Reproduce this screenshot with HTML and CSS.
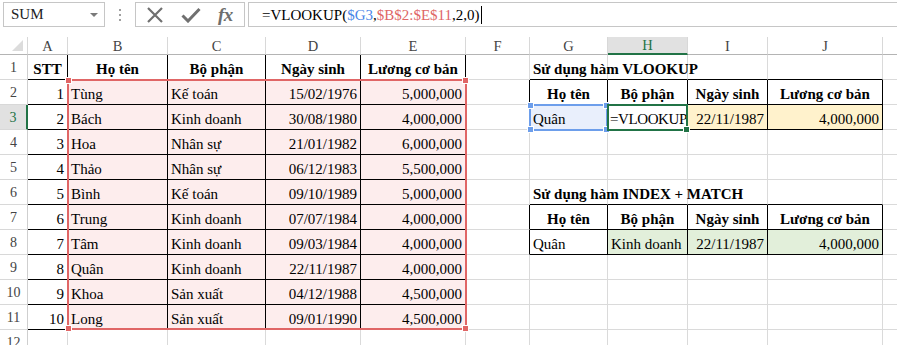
FILE: index.html
```html
<!DOCTYPE html>
<html>
<head>
<meta charset="utf-8">
<link rel="stylesheet" href="styles.css">
</head>
<body>
<div class="topbar">
  <div class="namebox"><span>SUM</span><span class="dd"></span></div>
  <div class="dots"><i></i><i></i><i></i></div>
  <div class="fbtns">
    <svg class="ico" width="18" height="16" viewBox="0 0 18 16"><path d="M2 1 L16 15 M16 1 L2 15" stroke="#707070" stroke-width="2.2" fill="none"/></svg>
    <svg class="ico" width="20" height="16" viewBox="0 0 20 16"><path d="M1.5 8.5 L7 14 L18.5 2" stroke="#707070" stroke-width="3" fill="none"/></svg>
    <span class="fx">fx</span>
  </div>
  <div class="finput">=VLOOKUP(<span class="cb">$G3</span>,<span class="cr">$B$2:$E$11</span>,2,0)<span class="caret"></span></div>
</div>

<div class="sheetwrap">
<div class="sheet">
  <div class="h corner"><span class="tri"></span></div>
  <div class="h">A</div><div class="h">B</div><div class="h">C</div><div class="h">D</div><div class="h">E</div><div class="h">F</div><div class="h">G</div><div class="h hsel">H</div><div class="h">I</div><div class="h">J</div><div class="h"></div>

  <div class="rh">1</div>
  <div class="c b ctr kr kb">STT</div><div class="c b ctr kr kb">Họ tên</div><div class="c b ctr kr kb">Bộ phận</div><div class="c b ctr kr kb">Ngày sinh</div><div class="c b ctr kr kb">Lương cơ bản</div>
  <div class="c"></div><div class="c b kb ov">Sử dụng hàm VLOOKUP</div><div class="c kb"></div><div class="c kb"></div><div class="c kb"></div><div class="c"></div>

  <div class="rh">2</div>
  <div class="c r kr kb">1</div><div class="c pk kr kb">Tùng</div><div class="c pk kr kb">Kế toán</div><div class="c pk r kr kb">15/02/1976</div><div class="c pk r kr kb">5,000,000</div>
  <div class="c kr"></div><div class="c b ctr kr kb">Họ tên</div><div class="c b ctr kr kb">Bộ phận</div><div class="c b ctr kr kb">Ngày sinh</div><div class="c b ctr kr kb">Lương cơ bản</div><div class="c"></div>

  <div class="rh rsel">3</div>
  <div class="c r kr kb">2</div><div class="c pk kr kb">Bách</div><div class="c pk kr kb">Kinh doanh</div><div class="c pk r kr kb">30/08/1980</div><div class="c pk r kr kb">4,000,000</div>
  <div class="c kr"></div><div class="c bl kr kb">Quân</div><div class="c edit kr kb">=VLOOKUP(</div><div class="c or r kr kb">22/11/1987</div><div class="c or r kr kb">4,000,000</div><div class="c"></div>

  <div class="rh">4</div>
  <div class="c r kr kb">3</div><div class="c pk kr kb">Hoa</div><div class="c pk kr kb">Nhân sự</div><div class="c pk r kr kb">21/01/1982</div><div class="c pk r kr kb">6,000,000</div>
  <div class="c"></div><div class="c"></div><div class="c"></div><div class="c"></div><div class="c"></div><div class="c"></div>

  <div class="rh">5</div>
  <div class="c r kr kb">4</div><div class="c pk kr kb">Thảo</div><div class="c pk kr kb">Nhân sự</div><div class="c pk r kr kb">06/12/1983</div><div class="c pk r kr kb">5,500,000</div>
  <div class="c"></div><div class="c"></div><div class="c"></div><div class="c"></div><div class="c"></div><div class="c"></div>

  <div class="rh">6</div>
  <div class="c r kr kb">5</div><div class="c pk kr kb">Bình</div><div class="c pk kr kb">Kế toán</div><div class="c pk r kr kb">09/10/1989</div><div class="c pk r kr kb">5,000,000</div>
  <div class="c"></div><div class="c b kb ov">Sử dụng hàm INDEX + MATCH</div><div class="c kb"></div><div class="c kb"></div><div class="c kb"></div><div class="c"></div>

  <div class="rh">7</div>
  <div class="c r kr kb">6</div><div class="c pk kr kb">Trung</div><div class="c pk kr kb">Kinh doanh</div><div class="c pk r kr kb">07/07/1984</div><div class="c pk r kr kb">4,000,000</div>
  <div class="c kr"></div><div class="c b ctr kr kb">Họ tên</div><div class="c b ctr kr kb">Bộ phận</div><div class="c b ctr kr kb">Ngày sinh</div><div class="c b ctr kr kb">Lương cơ bản</div><div class="c"></div>

  <div class="rh">8</div>
  <div class="c r kr kb">7</div><div class="c pk kr kb">Tâm</div><div class="c pk kr kb">Kinh doanh</div><div class="c pk r kr kb">09/03/1984</div><div class="c pk r kr kb">4,000,000</div>
  <div class="c kr"></div><div class="c kr kb">Quân</div><div class="c gr kr kb">Kinh doanh</div><div class="c gr r kr kb">22/11/1987</div><div class="c gr r kr kb">4,000,000</div><div class="c"></div>

  <div class="rh">9</div>
  <div class="c r kr kb">8</div><div class="c pk kr kb">Quân</div><div class="c pk kr kb">Kinh doanh</div><div class="c pk r kr kb">22/11/1987</div><div class="c pk r kr kb">4,000,000</div>
  <div class="c"></div><div class="c"></div><div class="c"></div><div class="c"></div><div class="c"></div><div class="c"></div>

  <div class="rh">10</div>
  <div class="c r kr kb">9</div><div class="c pk kr kb">Khoa</div><div class="c pk kr kb">Sản xuất</div><div class="c pk r kr kb">04/12/1988</div><div class="c pk r kr kb">4,500,000</div>
  <div class="c"></div><div class="c"></div><div class="c"></div><div class="c"></div><div class="c"></div><div class="c"></div>

  <div class="rh">11</div>
  <div class="c r kr kb">10</div><div class="c pk kr kb">Long</div><div class="c pk kr kb">Sản xuất</div><div class="c pk r kr kb">09/01/1990</div><div class="c pk r kr kb">4,500,000</div>
  <div class="c"></div><div class="c"></div><div class="c"></div><div class="c"></div><div class="c"></div><div class="c"></div>

  <div class="rh">12</div>
  <div class="c"></div><div class="c"></div><div class="c"></div><div class="c"></div><div class="c"></div>
  <div class="c"></div><div class="c"></div><div class="c"></div><div class="c"></div><div class="c"></div><div class="c"></div>
</div>

<div class="overlay">
  <div class="sel sel-red"><i class="hd tl"></i><i class="hd tr"></i><i class="hd bl2"></i><i class="hd br"></i></div>
  <div class="sel sel-blue"><i class="hd tl"></i><i class="hd tr"></i><i class="hd bl2"></i><i class="hd br"></i></div>
  <div class="sel sel-active"><i class="hd br"></i></div>
</div>
</div>
</body>
</html>
```

FILE: styles.css
```css
* { box-sizing: border-box; }
html, body { margin: 0; padding: 0; background: #fff; overflow: hidden; }
body { width: 897px; height: 345px; font-family: "Liberation Serif", "Times New Roman", serif; color: #000; }

.topbar { height: 37px; display: flex; align-items: flex-start; padding-top: 2px; padding-left: 3px; }
.namebox { width: 102px; height: 25px; border: 1px solid #c6c6c6; display: flex; align-items: center; justify-content: space-between; padding: 0 6px 0 7px; font-size: 15px; color: #222; }
.dd { width: 0; height: 0; border-left: 4px solid transparent; border-right: 4px solid transparent; border-top: 4px solid #7a7a7a; }
.dots { width: 30px; height: 25px; display: flex; flex-direction: column; align-items: center; justify-content: center; gap: 3px; }
.dots i { width: 2px; height: 2px; background: #a0a0a0; display: block; }
.fbtns { width: 110px; height: 25px; border: 1px solid #c6c6c6; display: flex; align-items: center; padding-left: 10px; gap: 17px; }
.fx { font-style: italic; font-weight: bold; font-size: 19px; color: #6e6e6e; font-family: "Liberation Serif", serif; letter-spacing: -0.5px; line-height: 20px; }
.finput { flex: 1; height: 25px; margin-left: 3px; border: 1px solid #c6c6c6; border-right: none; font-size: 15px; line-height: 22px; padding-left: 13px; display: flex; align-items: center; white-space: pre; }
.cb { color: #4a86e8; }
.cr { color: #e06666; }
.caret { display: inline-block; width: 1px; height: 18px; background: #000; margin-left: 1px; }

.sheetwrap { position: relative; }
.sheet, .overlay {
  display: grid;
  grid-template-columns: 28px 40px 100px 98px 95px 105px 64px 78px 80px 80px 115px 40px;
  grid-template-rows: 18px repeat(12, 25px);
}
.overlay { position: absolute; left: 0; top: 0; pointer-events: none; }

.h { border-right: 1px solid #d8d8d8; border-bottom: 1px solid #b4b4b4; font-size: 14.5px; color: #444; display: flex; align-items: center; justify-content: center; line-height: 16px; }
.corner { position: relative; }
.tri { position: absolute; right: 4px; bottom: 3px; width: 0; height: 0; border-left: 11px solid transparent; border-bottom: 11px solid #dcdcdc; }
.hsel { background: #e1e1e1; color: #217346; border-bottom: 2px solid #217346; }

.rh { border-right: 1px solid #cfcfcf; border-bottom: 1px solid #d8d8d8; font-size: 14px; color: #444; display: flex; align-items: center; justify-content: center; padding-top: 2px; }
.rsel { background: #e1e1e1; color: #217346; border-right: 2px solid #217346; }

.c { border-right: 1px solid #dadada; border-bottom: 1px solid #dadada; padding: 0 3px 1px 3px; display: flex; align-items: flex-end; white-space: nowrap; overflow: hidden; font-size: 15px; line-height: 17px; }
.c.ov { overflow: visible; position: relative; z-index: 1; }
.c.edit { padding-left: 2px; padding-right: 0; letter-spacing: -0.4px; }
.c.r { justify-content: flex-end; }
.c.ctr { justify-content: center; }
.c.b { font-weight: bold; }
.c.kr { border-right-color: #000; }
.c.kb { border-bottom-color: #000; }
.pk { background: #fdeded; }
.bl { background: #e9effc; }
.or { background: #fff2cc; }
.gr { background: #e2efda; }

.sel { position: relative; }
.sel-red { grid-column: 3 / 7; grid-row: 3 / 13; border: 2px solid #e06666; margin: -1px -1px 0 -1px; }
.sel-blue { grid-column: 8 / 9; grid-row: 4 / 5; border: 2px solid #6d9eeb; margin: -1px 0 -1px -1px; }
.sel-active { grid-column: 9 / 10; grid-row: 4 / 5; border: 2px solid #217346; margin: -1px 0 -1px -1px; }
.hd { position: absolute; width: 7px; height: 7px; border: 1px solid #fff; display: block; }
.sel-red .hd { background: #e06666; }
.sel-blue .hd { background: #6d9eeb; }
.sel-active .hd { background: #217346; }
.hd.tl { left: -4px; top: -4px; }
.hd.tr { right: -4px; top: -4px; }
.hd.bl2 { left: -4px; bottom: -4px; }
.hd.br { right: -4px; bottom: -4px; }
```
